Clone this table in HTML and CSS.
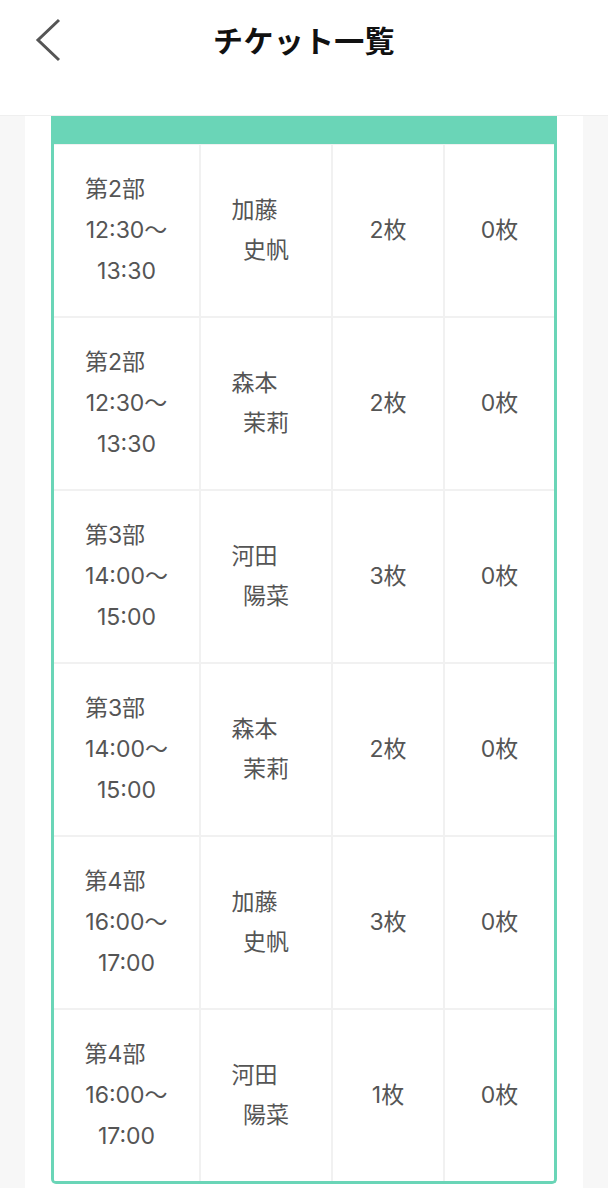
FILE: index.html
```html
<!DOCTYPE html>
<html lang="ja">
<head>
<meta charset="utf-8">
<title>チケット一覧</title>
<link rel="stylesheet" href="styles.css">
</head>
<body>
<header class="topbar">
  <button class="back" aria-label="戻る">
    <svg width="30" height="46" viewBox="0 0 30 46"><polyline points="24,4 3,24 24,44" fill="none" stroke="#555" stroke-width="3"/></svg>
  </button>
  <h1 class="title">チケット一覧</h1>
</header>
<main class="content">
  <section class="panel">
    <div class="ticket-table">
      <div class="table-head"></div>
      <div class="rows">
        <div class="cell"><div class="multi"><span>第2部<i class="sp"></i></span><span>12:30〜</span></div><span class="line">13:30</span></div>
        <div class="cell"><div class="name"><span>加藤<i class="sp"></i></span><span>史帆</span></div></div>
        <div class="cell">2枚</div>
        <div class="cell">0枚</div>

        <div class="cell"><div class="multi"><span>第2部<i class="sp"></i></span><span>12:30〜</span></div><span class="line">13:30</span></div>
        <div class="cell"><div class="name"><span>森本<i class="sp"></i></span><span>茉莉</span></div></div>
        <div class="cell">2枚</div>
        <div class="cell">0枚</div>

        <div class="cell"><div class="multi"><span>第3部<i class="sp"></i></span><span>14:00〜</span></div><span class="line">15:00</span></div>
        <div class="cell"><div class="name"><span>河田<i class="sp"></i></span><span>陽菜</span></div></div>
        <div class="cell">3枚</div>
        <div class="cell">0枚</div>

        <div class="cell"><div class="multi"><span>第3部<i class="sp"></i></span><span>14:00〜</span></div><span class="line">15:00</span></div>
        <div class="cell"><div class="name"><span>森本<i class="sp"></i></span><span>茉莉</span></div></div>
        <div class="cell">2枚</div>
        <div class="cell">0枚</div>

        <div class="cell"><div class="multi"><span>第4部<i class="sp"></i></span><span>16:00〜</span></div><span class="line">17:00</span></div>
        <div class="cell"><div class="name"><span>加藤<i class="sp"></i></span><span>史帆</span></div></div>
        <div class="cell">3枚</div>
        <div class="cell">0枚</div>

        <div class="cell"><div class="multi"><span>第4部<i class="sp"></i></span><span>16:00〜</span></div><span class="line">17:00</span></div>
        <div class="cell"><div class="name"><span>河田<i class="sp"></i></span><span>陽菜</span></div></div>
        <div class="cell">1枚</div>
        <div class="cell">0枚</div>
      </div>
    </div>
  </section>
</main>
</body>
</html>
```

FILE: styles.css
```css
* { box-sizing: border-box; }
html, body { margin: 0; padding: 0; background: #fff; }
body {
  font-family: "Inter", "Noto Sans CJK JP", sans-serif;
  color: #555;
}
.topbar {
  height: 116px;
  border-bottom: 1px solid #efefef;
  display: flex;
  align-items: flex-start;
  justify-content: center;
  position: relative;
}
.back {
  position: absolute;
  left: 35px;
  top: 16px;
  border: 0;
  padding: 0;
  background: none;
  line-height: 0;
}
.title {
  margin: 17px 0 0;
  font-family: "Noto Sans CJK JP", sans-serif;
  font-size: 30px;
  line-height: 44px;
  font-weight: 700;
  color: #111;
  letter-spacing: 0.3px;
}
.content {
  background: #f7f7f7;
  padding: 0 25px;
}
.panel {
  background: #fff;
  padding: 0 26px 4px;
}
.ticket-table {
  border: 3px solid #6ad5b7;
  border-top: 0;
  border-radius: 0 0 5px 5px;
  overflow: hidden;
}
.table-head {
  height: 28px;
  background: #6ad5b7;
}
.rows {
  display: grid;
  grid-template-columns: 145px 130px 110px 1fr;
  grid-auto-rows: 171px;
  gap: 2px;
  padding-top: 1px;
  background: #f1f1f1;
}
.cell {
  background: #fff;
  display: flex;
  flex-direction: column;
  align-items: center;
  justify-content: center;
  padding-bottom: 1px;
  font-size: 23px;
  line-height: 41px;
  text-align: center;
}
.multi, .name {
  display: flex;
  flex-direction: column;
  align-items: center;
}
.name { line-height: 40px; }
.line { display: block; }
.sp {
  display: inline-block;
  width: 23px;
}
```
